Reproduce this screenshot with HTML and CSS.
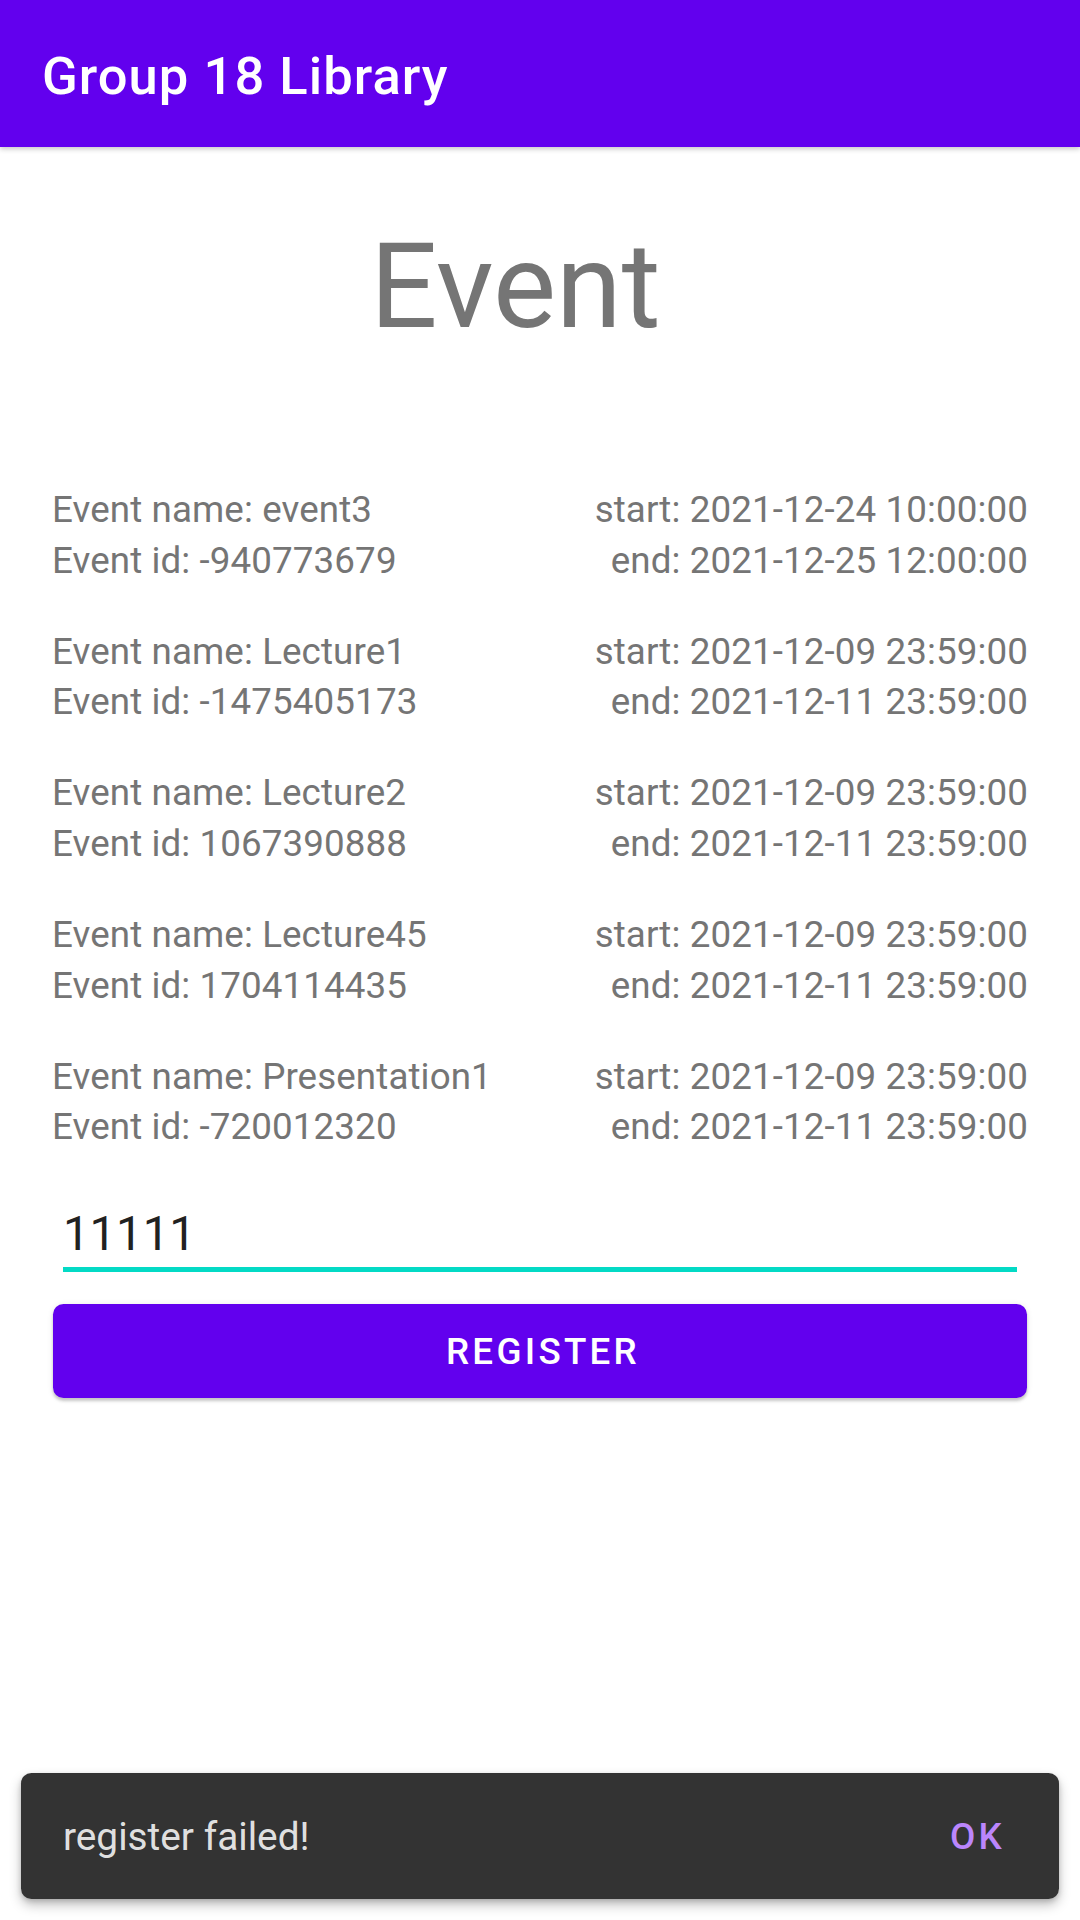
FILE: index.html
```html
<!DOCTYPE html>
<html lang="en">
<head>
<meta charset="utf-8">
<title>Group 18 Library</title>
<link rel="stylesheet" href="styles.css">
</head>
<body>
<div class="screen">
  <header class="appbar">
    <h1 class="appbar-title">Group 18 Library</h1>
  </header>
  <main class="content">
    <h2 class="page-title">Event</h2>
    <ul class="event-list">
      <li class="event-row">
        <div class="event-info"><div>Event name: event3</div><div>Event id: -940773679</div></div>
        <div class="event-times"><div>start: 2021-12-24 10:00:00</div><div>end: 2021-12-25 12:00:00</div></div>
      </li>
      <li class="event-row">
        <div class="event-info"><div>Event name: Lecture1</div><div>Event id: -1475405173</div></div>
        <div class="event-times"><div>start: 2021-12-09 23:59:00</div><div>end: 2021-12-11 23:59:00</div></div>
      </li>
      <li class="event-row">
        <div class="event-info"><div>Event name: Lecture2</div><div>Event id: 1067390888</div></div>
        <div class="event-times"><div>start: 2021-12-09 23:59:00</div><div>end: 2021-12-11 23:59:00</div></div>
      </li>
      <li class="event-row">
        <div class="event-info"><div>Event name: Lecture45</div><div>Event id: 1704114435</div></div>
        <div class="event-times"><div>start: 2021-12-09 23:59:00</div><div>end: 2021-12-11 23:59:00</div></div>
      </li>
      <li class="event-row">
        <div class="event-info"><div>Event name: Presentation1</div><div>Event id: -720012320</div></div>
        <div class="event-times"><div>start: 2021-12-09 23:59:00</div><div>end: 2021-12-11 23:59:00</div></div>
      </li>
    </ul>
    <div class="field">
      <input class="field-input" type="text" value="11111">
    </div>
    <button class="btn-register" type="button">REGISTER</button>
  </main>
  <div class="snackbar">
    <span class="snackbar-text">register failed!</span>
    <span class="snackbar-action">OK</span>
  </div>
</div>
</body>
</html>
```

FILE: styles.css
```css
* { box-sizing: border-box; }
html, body {
  margin: 0;
  padding: 0;
  background: #ffffff;
}
body {
  font-family: Roboto, "Noto Sans", "Liberation Sans", sans-serif;
}
.screen {
  position: relative;
  width: 1080px;
  height: 1920px;
  overflow: hidden;
  background: #ffffff;
}
.appbar {
  height: 147px;
  background: #6200ee;
  padding: 46px 42px 0 42px;
  box-shadow: 0 2px 5px rgba(0, 0, 0, 0.22);
  position: relative;
  z-index: 1;
}
.appbar-title {
  margin: 0;
  font-size: 52.5px;
  line-height: 61.5px;
  font-weight: 500;
  color: #ffffff;
  letter-spacing: 1.05px;
}
.content {
  padding: 71px 0 0 0;
  display: flex;
  flex-direction: column;
}
.page-title {
  margin: 0 0 130px 0;
  padding-left: 370px;
  font-size: 119px;
  line-height: 137px;
  font-weight: 400;
  color: #757575;
}
.event-list {
  list-style: none;
  margin: 0;
  padding: 0 52px;
  display: flex;
  flex-direction: column;
  gap: 40.7px;
}
.event-row {
  display: flex;
  justify-content: space-between;
  font-size: 36.75px;
  line-height: 50.5px;
  letter-spacing: 0.1px;
  color: #757575;
}
.event-times {
  text-align: right;
}
.field {
  margin: 50px 63px 0 63px;
  padding-bottom: 2px;
  border-bottom: 5px solid #03dac5;
}
.field-input {
  display: block;
  width: 100%;
  border: none;
  outline: none;
  padding: 0;
  margin: 0;
  background: transparent;
  font-family: Roboto, "Noto Sans", "Liberation Sans", sans-serif;
  font-size: 47.25px;
  line-height: 62px;
  height: 62px;
  color: #212121;
}
.btn-register {
  margin: 32px 53px 0 53px;
  height: 94.5px;
  padding: 0 0 0 6px;
  border: none;
  border-radius: 10.5px;
  background: #6200ee;
  color: #ffffff;
  font-family: Roboto, "Noto Sans", "Liberation Sans", sans-serif;
  font-size: 36.75px;
  font-weight: 500;
  letter-spacing: 0.0892em;
  box-shadow: 0 3px 3px rgba(0, 0, 0, 0.18), 0 1px 6px rgba(0, 0, 0, 0.1);
}
.snackbar {
  position: absolute;
  left: 21px;
  right: 21px;
  bottom: 21px;
  height: 126px;
  background: #333333;
  border-radius: 10.5px;
  display: flex;
  align-items: center;
  justify-content: space-between;
  padding: 0 54px 0 42px;
  box-shadow: 0 6px 12px rgba(0, 0, 0, 0.25), 0 2px 5px rgba(0, 0, 0, 0.15);
}
.snackbar-text {
  font-size: 38.8px;
  color: rgba(255, 255, 255, 0.87);
}
.snackbar-action {
  font-size: 36.75px;
  font-weight: 500;
  letter-spacing: 0.0892em;
  color: #bb86fc;
}
```
